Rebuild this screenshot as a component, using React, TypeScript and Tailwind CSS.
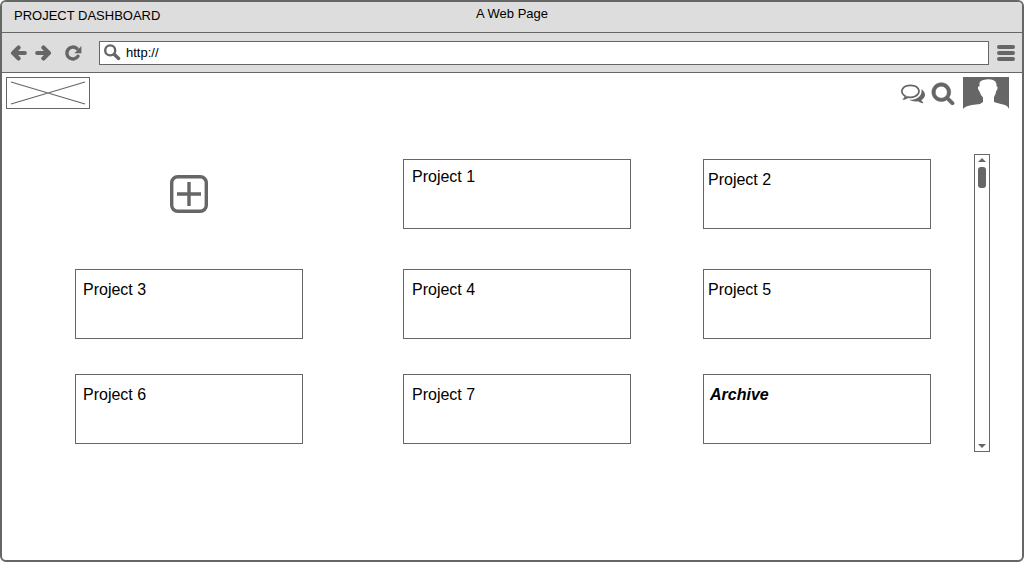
type Project = { name: string; card: string };

const projects: Project[] = [
  { name: "Project 1", card: "pl-2 pt-[5px]" },
  { name: "Project 2", card: "pl-1 pt-2" },
  { name: "Project 3", card: "pl-[7px] pt-2" },
  { name: "Project 4", card: "pl-2 pt-2" },
  { name: "Project 5", card: "pl-1 pt-2" },
  { name: "Project 6", card: "pl-[7px] pt-2" },
  { name: "Project 7", card: "pl-2 pt-2" },
];

const cardBase =
  "block h-[70px] w-[228px] max-w-full border border-[#666] bg-white text-base leading-6 text-black";

function ArrowIcon({ flip = false }: { flip?: boolean }) {
  return (
    <svg viewBox="0 0 17 16" className={flip ? "h-4 w-[17px] -scale-x-100" : "h-4 w-[17px]"} fill="none" stroke="#666" strokeWidth="4.2" strokeLinecap="round" strokeLinejoin="round" aria-hidden="true">
      <path d="M4 8H14.800M8.600 2.600L3.100 8l5.500 5.400" />
    </svg>
  );
}

function ReloadIcon() {
  return (
    <svg viewBox="0 0 18 18" className="size-[18px]" aria-hidden="true">
      <path d="M12.900 4.600A6 6 0 1 0 14 12.200" fill="none" stroke="#666" strokeWidth="3.400" strokeLinecap="round" />
      <path d="M17.400 2v7.200H10.400z" fill="#666" />
    </svg>
  );
}

function LensIcon() {
  return (
    <svg viewBox="0 0 17 17" className="size-[17px]" fill="none" stroke="#666" aria-hidden="true">
      <circle cx="6.2" cy="6.4" r="5" strokeWidth="2.4" />
      <path d="M10.400 10.400l4.200 4" strokeWidth="3.4" strokeLinecap="round" />
    </svg>
  );
}

function CommentsIcon() {
  return (
    <svg viewBox="0 0 1792 1792" className="size-6" fill="#666" aria-hidden="true">
      <path d="M704 384q-153 0-286 52t-211.5 141-78.5 191q0 82 53 158t149 132l97 56-35 84q34-20 62-39l44-31 53 10q78 14 153 14 153 0 286-52t211.5-141 78.5-191-78.5-191-211.5-141-286-52zm0-128q191 0 353.5 68.5t256.5 186.5 94 257-94 257-256.5 186.5-353.5 68.5q-86 0-176-16-124 88-278 128-36 9-86 16h-3q-11 0-20.5-8t-11.5-21q-1-3-1-6.5t.5-6.5 2-6l2.5-5 3.5-5.5 4-5 4.5-5 4-4.5q5-6 23-25t26-29.5 22.5-29 25-38.5 20.5-44q-124-72-195-177t-71-224q0-139 94-257t256.5-186.5 353.5-68.5zm822 1169q10 24 20.5 44t25 38.5 22.5 29 26 29.5 23 25q1 1 4 4.5t4.5 5 4 5 3.5 5.5l2.5 5 2 6 .5 6.5-1 6.5q-3 14-13 22t-22 7q-50-7-86-16-154-40-278-128-90 16-176 16-271 0-472-132 58 4 88 4 161 0 309-45t264-129q125-92 192-212t67-254q0-77-23-152 129 71 204 178t75 230q0 120-71 224.5t-195 176.5z" />
    </svg>
  );
}

function SearchIcon() {
  return (
    <svg viewBox="0 0 1792 1792" className="size-6" fill="#666" stroke="#666" strokeWidth="40" aria-hidden="true">
      <path d="M1216 832q0-185-131.5-316.5t-316.5-131.5-316.5 131.5-131.5 316.5 131.5 316.5 316.5 131.5 316.5-131.5 131.5-316.5zm512 832q0 52-38 90t-90 38q-54 0-90-38l-343-342q-179 124-399 124-143 0-273.5-55.5t-225-150-150-225-55.5-273.5 55.5-273.5 150-225 225-150 273.5-55.5 273.5 55.5 225 150 150 225 55.5 273.5q0 220-124 399l343 343q37 37 37 90z" />
    </svg>
  );
}

function Avatar() {
  return (
    <svg viewBox="0 0 46 32" className="h-8 w-[46px]" aria-hidden="true">
      <path d="M0 0H46V32Q45 29 42 28L36 26.500L31 25V20L32.500 17L33 14.500L34.500 12V9.500H33.500V7Q33 4 30 3Q27 2 23 2.500Q17 3 16.500 6V9.500H15V12L16.500 14.500L18 18L20 20.500V25L17 27L9 28Q2 29 0 32Z" fill="#666" />
    </svg>
  );
}

function AddIcon() {
  return (
    <svg viewBox="0 0 38 38" className="size-[38px]" fill="none" stroke="#666" strokeWidth="3.4" aria-hidden="true">
      <rect x="1.700" y="1.700" width="34.600" height="34.600" rx="6" />
      <path d="M19 7v24M7 19h24" />
    </svg>
  );
}

export default function App() {
  return (
    <div className="flex min-h-screen flex-col overflow-hidden rounded-md border-2 border-[#666] bg-white font-['Liberation_Sans',Arial,sans-serif] text-black">
      <div className="grid h-[31px] grid-cols-3 border-b border-[#666] bg-[#ddd] text-[13px] leading-4">
        <h1 className="whitespace-nowrap pl-3 pt-1.5">PROJECT DASHBOARD</h1>
        <span className="pt-1 text-center">A Web Page</span>
      </div>

      <div className="flex h-10 items-center border-b border-[#666] bg-[#ddd] pl-2 pr-[7px]">
        <nav className="flex items-center" aria-label="Browser">
          <button type="button" aria-label="Back"><ArrowIcon /></button>
          <button type="button" aria-label="Forward" className="ml-2"><ArrowIcon flip /></button>
          <button type="button" aria-label="Reload" className="ml-3"><ReloadIcon /></button>
        </nav>
        <label className="ml-[17px] flex h-6 min-w-0 flex-1 items-center gap-[5px] border border-[#666] bg-white pl-1">
          <LensIcon />
          <input type="text" aria-label="Address" defaultValue="http://" className="min-w-0 flex-1 bg-transparent text-[13px] leading-4 outline-none" />
        </label>
        <button type="button" aria-label="Menu" className="ml-2 flex flex-col gap-0.5">
          <span className="h-1 w-[18px] rounded-full bg-[#666]" />
          <span className="h-1 w-[18px] rounded-full bg-[#666]" />
          <span className="h-1 w-[18px] rounded-full bg-[#666]" />
        </button>
      </div>

      <header className="flex justify-between pl-1 pr-[13px] pt-1">
        <a href="#home" aria-label="Home" className="block h-8 w-[84px] border border-[#666]">
          <svg viewBox="0 0 82 30" className="size-full" fill="none" stroke="#666" strokeWidth="1.2" aria-hidden="true">
            <path d="M4 4L78 26M78 4L4 26" />
          </svg>
        </a>
        <div className="flex items-center">
          <button type="button" aria-label="Messages"><CommentsIcon /></button>
          <button type="button" aria-label="Search" className="ml-1.5"><SearchIcon /></button>
          <button type="button" aria-label="Profile" className="ml-2"><Avatar /></button>
        </div>
      </header>

      <main className="mt-[45px] flex pl-[73px] pr-8">
        <div className="grid flex-1 grid-cols-[328fr_300fr_228fr] grid-rows-[110px_105px_70px] items-start pb-2 pt-[5px]">
          <div className="flex h-[70px] w-[228px] max-w-full items-center justify-center">
            <button type="button" aria-label="Add project"><AddIcon /></button>
          </div>
          {projects.map((p) => (
            <a key={p.name} href="#project" className={`${cardBase} ${p.card}`}>{p.name}</a>
          ))}
          <a href="#archive" className={`${cardBase} pl-1.5 pt-2 font-bold italic`}>Archive</a>
        </div>
        <div className="ml-[43px] flex w-4 flex-col items-center border border-[#666] py-[3px]">
          <button type="button" aria-label="Scroll up">
            <svg viewBox="0 0 8 4" className="h-1 w-2" fill="#666" aria-hidden="true"><path d="M0 4L4 0l4 4z" /></svg>
          </button>
          <div className="mt-[5px] h-[21px] w-2 rounded-[3px] bg-[#666]" />
          <button type="button" aria-label="Scroll down" className="mt-auto">
            <svg viewBox="0 0 8 4" className="h-1 w-2" fill="#666" aria-hidden="true"><path d="M0 0h8L4 4z" /></svg>
          </button>
        </div>
      </main>
    </div>
  );
}
